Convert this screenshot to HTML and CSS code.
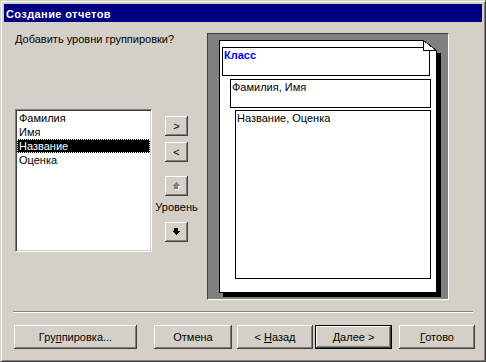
FILE: index.html
```html
<!DOCTYPE html>
<html lang="ru">
<head>
  <meta charset="UTF-8">
  <meta name="viewport" content="width=device-width, initial-scale=1.0">
  <title>Создание отчетов</title>
  <link rel="stylesheet" href="styles.css">
</head>
<body>
  <div class="window">
    <div class="titlebar">Создание отчетов</div>
    <div class="content">
      <div class="main">
        <div class="left">
          <div class="prompt">Добавить уровни группировки?</div>
          <div class="picker">
            <ul class="listbox">
              <li>Фамилия</li>
              <li>Имя</li>
              <li class="selected">Название</li>
              <li>Оценка</li>
            </ul>
            <div class="movers">
              <button class="btn small">&gt;</button>
              <button class="btn small">&lt;</button>
              <button class="btn small arrow-up" disabled>
                <svg width="9" height="8" viewBox="0 0 9 8" shape-rendering="crispEdges">
                  <path d="M5 1 L9 5 L7 5 L7 8 L3 8 L3 5 L1 5 Z" fill="#fff"/>
                  <path d="M4 0 L8 4 L6 4 L6 7 L2 7 L2 4 L0 4 Z" fill="#808080"/>
                </svg>
              </button>
              <div class="level">Уровень</div>
              <button class="btn small arrow-down">
                <svg width="9" height="8" viewBox="0 0 9 8" shape-rendering="crispEdges">
                  <path d="M2 0 L6 0 L6 3 L8 3 L4 7 L0 3 L2 3 Z" fill="#000"/>
                </svg>
              </button>
            </div>
          </div>
        </div>
        <div class="preview">
          <div class="page">
            <svg class="fold" width="19" height="14" viewBox="0 0 19 14" shape-rendering="crispEdges">
              <polygon points="0,0 19,0 19,13 14,13 14,11 13,11" fill="#808080"/>
              <polygon points="0.5,0.5 0.5,10.5 13.5,10.5" fill="#fff" stroke="#000" stroke-width="1"/>
              <line x1="0.5" y1="0.5" x2="13.5" y2="10.5" stroke="#404040" stroke-width="1" shape-rendering="auto"/>
            </svg>
            <div class="band band-class">Класс</div>
            <div class="band band-name">Фамилия, Имя</div>
            <div class="band band-detail">Название, Оценка</div>
          </div>
        </div>
      </div>
      <div class="separator"></div>
      <div class="actions">
        <button class="btn action w-group"><span>Гру<u>п</u>пировка...</span></button>
        <button class="btn action w-cancel"><span>Отмена</span></button>
        <button class="btn action w-back"><span>&lt; <u>Н</u>азад</span></button>
        <button class="btn action default w-next"><span><u>Д</u>алее &gt;</span></button>
        <button class="btn action w-done"><span><u>Г</u>отово</span></button>
      </div>
    </div>
  </div>
</body>
</html>
```

FILE: styles.css
```css
body {
  margin: 0;
  padding: 0;
  background-color: #d4d0c8;
  font-family: "Liberation Sans", Arial, sans-serif;
  font-size: 11px;
  color: #000;
}

.window {
  box-sizing: border-box;
  width: 486px;
  height: 362px;
  padding: 3px;
  background-color: #d4d0c8;
  border: 1px solid;
  border-color: #d4d0c8 #404040 #404040 #d4d0c8;
  box-shadow: inset 1px 1px #fff, inset -1px -1px #808080;
  display: flex;
  flex-direction: column;
}

.titlebar {
  height: 18px;
  line-height: 18px;
  padding: 1px 0 0 2px;
  box-sizing: border-box;
  background-color: #000080;
  color: #fff;
  font-weight: bold;
  font-size: 11px;
  letter-spacing: 0.4px;
}

.content {
  display: flex;
  flex-direction: column;
}

.main {
  display: flex;
  margin-top: 11px;
  padding-left: 11px;
}

.left {
  width: 192px;
}

.prompt {
  line-height: 13px;
}

.picker {
  display: flex;
  margin-top: 63px;
}

.listbox {
  box-sizing: border-box;
  width: 137px;
  height: 143px;
  margin: 0;
  padding: 1px;
  list-style: none;
  background-color: #fff;
  border: 1px solid;
  border-color: #808080 #fff #fff #808080;
  box-shadow: inset 1px 1px #404040, inset -1px -1px #d4d0c8;
}

.listbox li {
  height: 14px;
  line-height: 14px;
  padding-left: 2px;
}

.listbox li.selected {
  background-color: #000;
  color: #fff;
  outline: 1px dotted #fff;
  outline-offset: -1px;
}

.movers {
  display: flex;
  flex-direction: column;
  align-items: center;
  width: 23px;
  margin-left: 13px;
  padding-top: 7px;
}

.btn {
  box-sizing: border-box;
  margin: 0;
  padding: 0;
  font-family: "Liberation Sans", Arial, sans-serif;
  font-size: 11px;
  color: #000;
  background-color: #d4d0c8;
  border: none;
  box-shadow: inset -1px -1px #404040, inset 1px 1px #fff, inset -2px -2px #808080, inset 2px 2px #d4d0c8;
  display: flex;
  justify-content: center;
  align-items: center;
}

.btn span {
  white-space: pre;
}

.btn.small {
  width: 23px;
  height: 20px;
  margin-bottom: 6px;
}

.btn.arrow-up {
  margin-top: 8px;
  margin-bottom: 0;
}

.btn.arrow-down {
  margin-bottom: 0;
}

.level {
  line-height: 13px;
  margin-top: 5px;
  margin-bottom: 8px;
  white-space: nowrap;
}

.preview {
  box-sizing: border-box;
  width: 242px;
  height: 267px;
  background-color: #808080;
  border: 1px solid;
  border-color: #404040 #fff #fff #404040;
  padding: 6px 0 0 11px;
}

.page {
  position: relative;
  box-sizing: border-box;
  width: 218px;
  height: 253px;
  background-color: #fff;
  border: 1px solid #000;
  box-shadow: 4px 4px 0 #000;
  padding: 6px 0 0 2px;
}

.fold {
  position: absolute;
  top: -1px;
  left: 203px;
}

.band {
  box-sizing: border-box;
  border: 1px solid #000;
  padding: 1px;
  line-height: 13px;
}

.band-class {
  width: 208px;
  height: 29px;
  color: #0000ff;
  font-weight: bold;
}

.band-name {
  width: 201px;
  height: 29px;
  margin: 3px 0 0 8px;
}

.band-detail {
  width: 196px;
  height: 169px;
  margin: 2px 0 0 13px;
}

.separator {
  width: 460px;
  height: 0;
  margin: 11px 0 0 9px;
  border-top: 1px solid #808080;
  border-bottom: 1px solid #fff;
}

.actions {
  display: flex;
  margin-top: 12px;
  padding-left: 10px;
}

.btn.action {
  height: 24px;
}

.btn.default {
  border: 1px solid #000;
}

.w-group { width: 123px; }
.w-cancel { width: 78px; margin-left: 17px; }
.w-back { width: 76px; margin-left: 5px; }
.w-next { width: 77px; margin-left: 2px; }
.w-done { width: 76px; margin-left: 7px; }
```
